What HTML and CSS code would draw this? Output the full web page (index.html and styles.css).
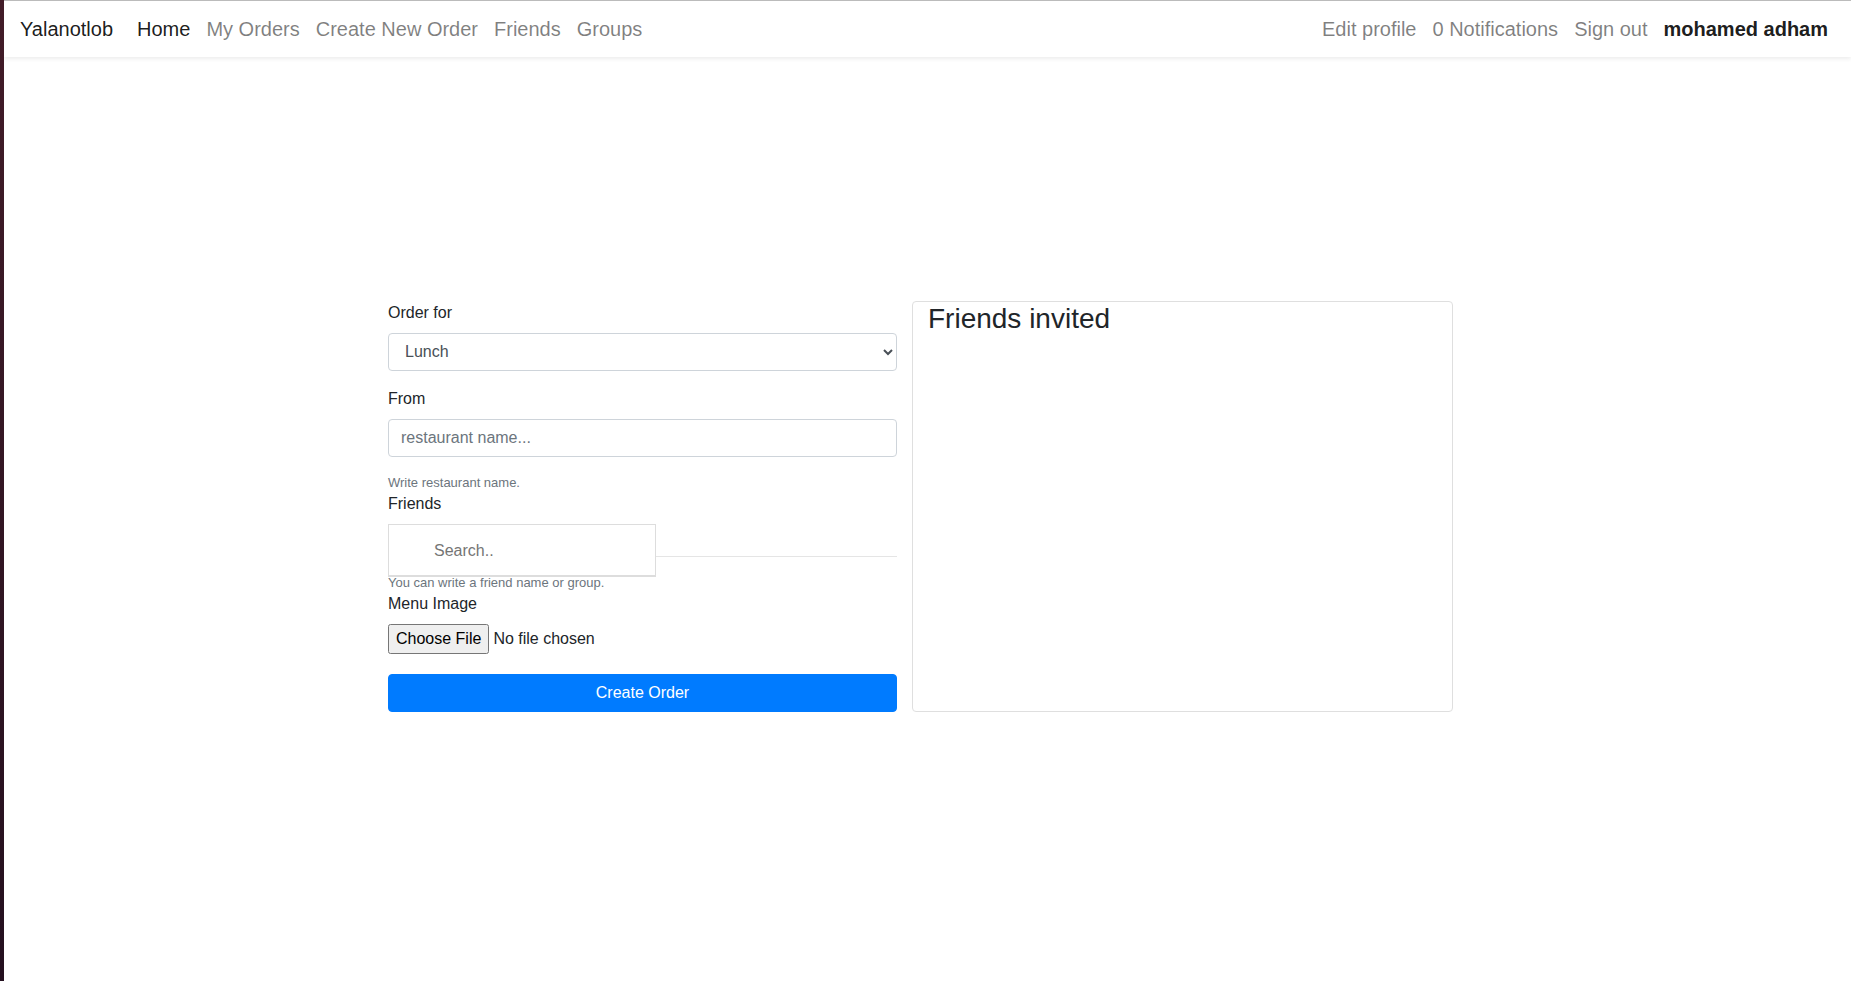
FILE: index.html
```html
<!DOCTYPE html>
<html lang="en">
<head>
<meta charset="utf-8">
<title>Yalanotlob</title>
<link rel="stylesheet" href="styles.css">
</head>
<body>
<nav class="navbar">
  <a class="brand" href="#">Yalanotlob</a>
  <ul class="nav-list">
    <li><a class="nav-link active" href="#">Home</a></li>
    <li><a class="nav-link" href="#">My Orders</a></li>
    <li><a class="nav-link" href="#">Create New Order</a></li>
    <li><a class="nav-link" href="#">Friends</a></li>
    <li><a class="nav-link" href="#">Groups</a></li>
  </ul>
  <ul class="nav-list nav-end">
    <li><a class="nav-link" href="#">Edit profile</a></li>
    <li><a class="nav-link" href="#">0 Notifications</a></li>
    <li><a class="nav-link" href="#">Sign out</a></li>
    <li><a class="nav-link user" href="#">mohamed adham</a></li>
  </ul>
</nav>
<main class="page">
  <div class="columns">
    <form class="order-form">
      <div class="group">
        <label for="meal">Order for</label>
        <select class="control select" id="meal"><option>Lunch</option><option>Breakfast</option></select>
      </div>
      <div class="group">
        <label for="restaurant">From</label>
        <input class="control" id="restaurant" type="text" placeholder="restaurant name...">
      </div>
      <small class="hint">Write restaurant name.</small>
      <label for="friends">Friends</label>
      <div class="dropdown">
        <div class="dropdown-content">
          <input class="search" id="friends" type="text" placeholder="Search..">
        </div>
        <hr class="rule">
      </div>
      <small class="hint">You can write a friend name or group.</small>
      <label for="menu">Menu Image</label>
      <input class="file" id="menu" type="file">
      <button class="submit" type="submit">Create Order</button>
    </form>
    <section class="invited">
      <h1 class="invited-title">Friends invited</h1>
    </section>
  </div>
</main>
</body>
</html>
```
FILE: styles.css
```css
*, *::before, *::after { box-sizing: border-box; }

body {
  margin: 0;
  min-height: 100vh;
  display: flex;
  flex-direction: column;
  font: 16px/24px "Liberation Sans", Arial, sans-serif;
  color: #212529;
  background: #fff;
  border-top: 1px solid #bbb;
}

/* dark strip along the left side of the window */
html {
  border-left: 4px solid;
  border-image: linear-gradient(#421c28, #24101f) 1;
  border-image-width: 0 0 0 4px;
}

.navbar {
  display: flex;
  align-items: center;
  padding: 8px 15px 8px 16px;
  background: #fff;
  box-shadow: 0 2px 4px rgba(0, 0, 0, .075);
  font-size: 20px;
}
.brand {
  margin-right: 16px;
  color: rgba(0, 0, 0, .9);
  text-decoration: none;
}
.nav-list {
  display: flex;
  margin: 0;
  padding: 0;
  list-style: none;
}
.nav-end { margin-left: auto; }
.nav-link {
  display: block;
  padding: 8px;
  color: rgba(0, 0, 0, .5);
  text-decoration: none;
}
.nav-link.active { color: rgba(0, 0, 0, .9); }
.nav-link.user { color: rgba(0, 0, 0, .9); font-weight: 700; }

.page {
  flex: 1;
  display: flex;
  align-items: center;
  justify-content: center;
  padding: 0 14px 26px 0;
}
.columns {
  display: grid;
  grid-template-columns: 509fr 541fr;
  gap: 15px;
  width: 100%;
  max-width: 1065px;
}

.order-form label { display: block; margin-bottom: 8px; }
.group { margin-bottom: 16px; }
.control {
  display: block;
  width: 100%;
  height: 38px;
  padding: 6px 12px;
  border: 1px solid #ced4da;
  border-radius: 4px;
  background: #fff;
  color: #495057;
  font: inherit;
}
.control::placeholder { color: #6c757d; opacity: 1; }
.select { padding: 6px 0 6px 12px; }
.hint {
  display: block;
  font-size: 13px;
  line-height: 19px;
  color: #6c757d;
}

.dropdown { position: relative; padding-top: 32px; }
.dropdown-content {
  position: absolute;
  top: 0;
  left: 0;
  border: 1px solid #ddd;
  background: #fff;
}
.search {
  display: block;
  width: 266px;
  height: 51px;
  padding: 14px 20px 12px 45px;
  border: 0;
  border-bottom: 1px solid #ddd;
  font: inherit;
}
.rule {
  margin: 0 0 16px;
  border: 0;
  border-top: 1px solid rgba(0, 0, 0, .1);
}
.file { display: block; width: 100%; font: inherit; }
.file::file-selector-button { height: 30px; font: inherit; }
.submit {
  display: block;
  width: 100%;
  margin-top: 20px;
  padding: 6px 12px;
  border: 1px solid #007bff;
  border-radius: 4px;
  background: #007bff;
  color: #fff;
  font: inherit;
}

.invited {
  padding: 0 15px;
  border: 1px solid #dfdfdf;
  border-radius: 4px;
}
.invited-title {
  margin: 0;
  font-size: 28px;
  line-height: 34px;
  font-weight: 500;
}
```
